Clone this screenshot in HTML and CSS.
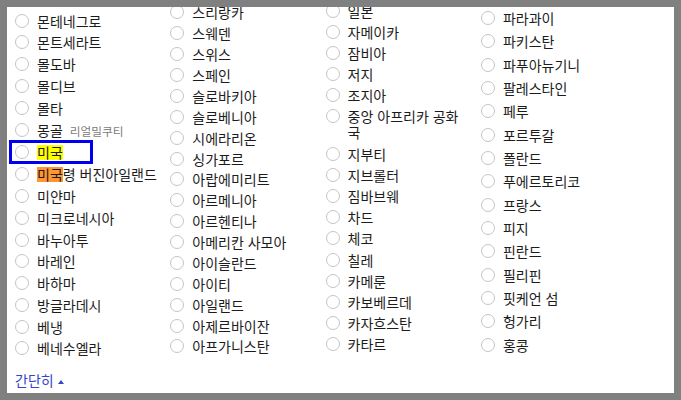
FILE: index.html
```html
<!DOCTYPE html>
<html lang="ko">
<head>
    <meta charset="UTF-8">
    <title>국가 선택</title>
    <link rel="stylesheet" href="styles.css">
</head>
<body>

<div class="picker">
    <div class="columns">
        <ul class="col col-1">
            <li class="item"><span class="radio"></span><span class="name">몬테네그로</span></li>
            <li class="item"><span class="radio"></span><span class="name">몬트세라트</span></li>
            <li class="item"><span class="radio"></span><span class="name">몰도바</span></li>
            <li class="item"><span class="radio"></span><span class="name">몰디브</span></li>
            <li class="item"><span class="radio"></span><span class="name">몰타</span></li>
            <li class="item"><span class="radio"></span><span class="name">몽골 <span class="ghost">리얼밀쿠티</span></span></li>
            <li class="item is-focused"><span class="radio"></span><span class="name"><mark class="hit">미국</mark></span></li>
            <li class="item"><span class="radio"></span><span class="name"><mark class="hit hit-active">미국</mark>령 버진아일랜드</span></li>
            <li class="item"><span class="radio"></span><span class="name">미얀마</span></li>
            <li class="item"><span class="radio"></span><span class="name">미크로네시아</span></li>
            <li class="item"><span class="radio"></span><span class="name">바누아투</span></li>
            <li class="item"><span class="radio"></span><span class="name">바레인</span></li>
            <li class="item"><span class="radio"></span><span class="name">바하마</span></li>
            <li class="item"><span class="radio"></span><span class="name">방글라데시</span></li>
            <li class="item"><span class="radio"></span><span class="name">베냉</span></li>
            <li class="item"><span class="radio"></span><span class="name">베네수엘라</span></li>
        </ul>
        <ul class="col col-2">
            <li class="item"><span class="radio"></span><span class="name">스리랑카</span></li>
            <li class="item"><span class="radio"></span><span class="name">스웨덴</span></li>
            <li class="item"><span class="radio"></span><span class="name">스위스</span></li>
            <li class="item"><span class="radio"></span><span class="name">스페인</span></li>
            <li class="item"><span class="radio"></span><span class="name">슬로바키아</span></li>
            <li class="item"><span class="radio"></span><span class="name">슬로베니아</span></li>
            <li class="item"><span class="radio"></span><span class="name">시에라리온</span></li>
            <li class="item"><span class="radio"></span><span class="name">싱가포르</span></li>
            <li class="item"><span class="radio"></span><span class="name">아랍에미리트</span></li>
            <li class="item"><span class="radio"></span><span class="name">아르메니아</span></li>
            <li class="item"><span class="radio"></span><span class="name">아르헨티나</span></li>
            <li class="item"><span class="radio"></span><span class="name">아메리칸 사모아</span></li>
            <li class="item"><span class="radio"></span><span class="name">아이슬란드</span></li>
            <li class="item"><span class="radio"></span><span class="name">아이티</span></li>
            <li class="item"><span class="radio"></span><span class="name">아일랜드</span></li>
            <li class="item"><span class="radio"></span><span class="name">아제르바이잔</span></li>
            <li class="item"><span class="radio"></span><span class="name">아프가니스탄</span></li>
        </ul>
        <ul class="col col-3">
            <li class="item"><span class="radio"></span><span class="name">일본</span></li>
            <li class="item"><span class="radio"></span><span class="name">자메이카</span></li>
            <li class="item"><span class="radio"></span><span class="name">잠비아</span></li>
            <li class="item"><span class="radio"></span><span class="name">저지</span></li>
            <li class="item"><span class="radio"></span><span class="name">조지아</span></li>
            <li class="item"><span class="radio"></span><span class="name">중앙 아프리카 공화<br>국</span></li>
            <li class="item"><span class="radio"></span><span class="name">지부티</span></li>
            <li class="item"><span class="radio"></span><span class="name">지브롤터</span></li>
            <li class="item"><span class="radio"></span><span class="name">짐바브웨</span></li>
            <li class="item"><span class="radio"></span><span class="name">차드</span></li>
            <li class="item"><span class="radio"></span><span class="name">체코</span></li>
            <li class="item"><span class="radio"></span><span class="name">칠레</span></li>
            <li class="item"><span class="radio"></span><span class="name">카메룬</span></li>
            <li class="item"><span class="radio"></span><span class="name">카보베르데</span></li>
            <li class="item"><span class="radio"></span><span class="name">카자흐스탄</span></li>
            <li class="item"><span class="radio"></span><span class="name">카타르</span></li>
        </ul>
        <ul class="col col-4">
            <li class="item"><span class="radio"></span><span class="name">파라과이</span></li>
            <li class="item"><span class="radio"></span><span class="name">파키스탄</span></li>
            <li class="item"><span class="radio"></span><span class="name">파푸아뉴기니</span></li>
            <li class="item"><span class="radio"></span><span class="name">팔레스타인</span></li>
            <li class="item"><span class="radio"></span><span class="name">페루</span></li>
            <li class="item"><span class="radio"></span><span class="name">포르투갈</span></li>
            <li class="item"><span class="radio"></span><span class="name">폴란드</span></li>
            <li class="item"><span class="radio"></span><span class="name">푸에르토리코</span></li>
            <li class="item"><span class="radio"></span><span class="name">프랑스</span></li>
            <li class="item"><span class="radio"></span><span class="name">피지</span></li>
            <li class="item"><span class="radio"></span><span class="name">핀란드</span></li>
            <li class="item"><span class="radio"></span><span class="name">필리핀</span></li>
            <li class="item"><span class="radio"></span><span class="name">핏케언 섬</span></li>
            <li class="item"><span class="radio"></span><span class="name">헝가리</span></li>
            <li class="item"><span class="radio"></span><span class="name">홍콩</span></li>
        </ul>
    </div>

    <a class="less-link" href="#">간단히</a>
</div>

</body>
</html>
```

FILE: styles.css
```css
body {
    margin: 0;
    font-family: "Noto Sans CJK KR", "Noto Sans", sans-serif;
    font-size: 14px;
    color: #1c1c1c;
    background-color: #ffffff;
}

.picker {
    box-sizing: border-box;
    width: 681px;
    height: 400px;
    border: 7px solid #808080;
    padding-left: 8px;
    overflow: hidden;
    background-color: #ffffff;
}

.columns {
    display: flex;
    align-items: flex-start;
    height: 363px;
}

.col {
    list-style: none;
    margin: var(--shift) 0 0;
    padding: 0;
    flex: 0 0 155.3px;
}

.col-1 { --row: 21.8px; --shift: 2.8px; }
.col-2 { --row: 20.9px; --shift: -5px; }
.col-3 { --row: 21.2px; --shift: -7.1px; }
.col-4 { --row: 23.35px; --shift: -0.7px; }

.item {
    display: flex;
    align-items: flex-start;
    box-sizing: border-box;
    padding: calc((var(--row) - 16px) / 2) 0;
    line-height: 16px;
}

.radio {
    flex: 0 0 auto;
    box-sizing: border-box;
    width: 14px;
    height: 14px;
    margin-top: 1px;
    margin-right: 8px;
    border: 1px solid #c4c4c4;
    border-radius: 50%;
    background-color: #ffffff;
}

.name {
    white-space: nowrap;
}

.ghost {
    margin-left: 3px;
    font-size: 11.7px;
    color: #7c7c7c;
}

.hit {
    display: inline-block;
    height: 15px;
    line-height: 15px;
    color: inherit;
    background-color: #ffff00;
}

.hit-active {
    background-color: #ff9632;
}

.is-focused {
    width: 82px;
    margin-left: -5px;
    padding-left: 5px;
    outline: 3px solid #0000f0;
    outline-offset: -2px;
}

.less-link {
    display: inline-block;
    line-height: 16px;
    color: #3345c9;
    text-decoration: none;
}

.less-link::after {
    content: "";
    display: inline-block;
    margin-left: 4px;
    vertical-align: 2px;
    border-left: 3px solid transparent;
    border-right: 3px solid transparent;
    border-bottom: 4px solid #3345c9;
}
```
